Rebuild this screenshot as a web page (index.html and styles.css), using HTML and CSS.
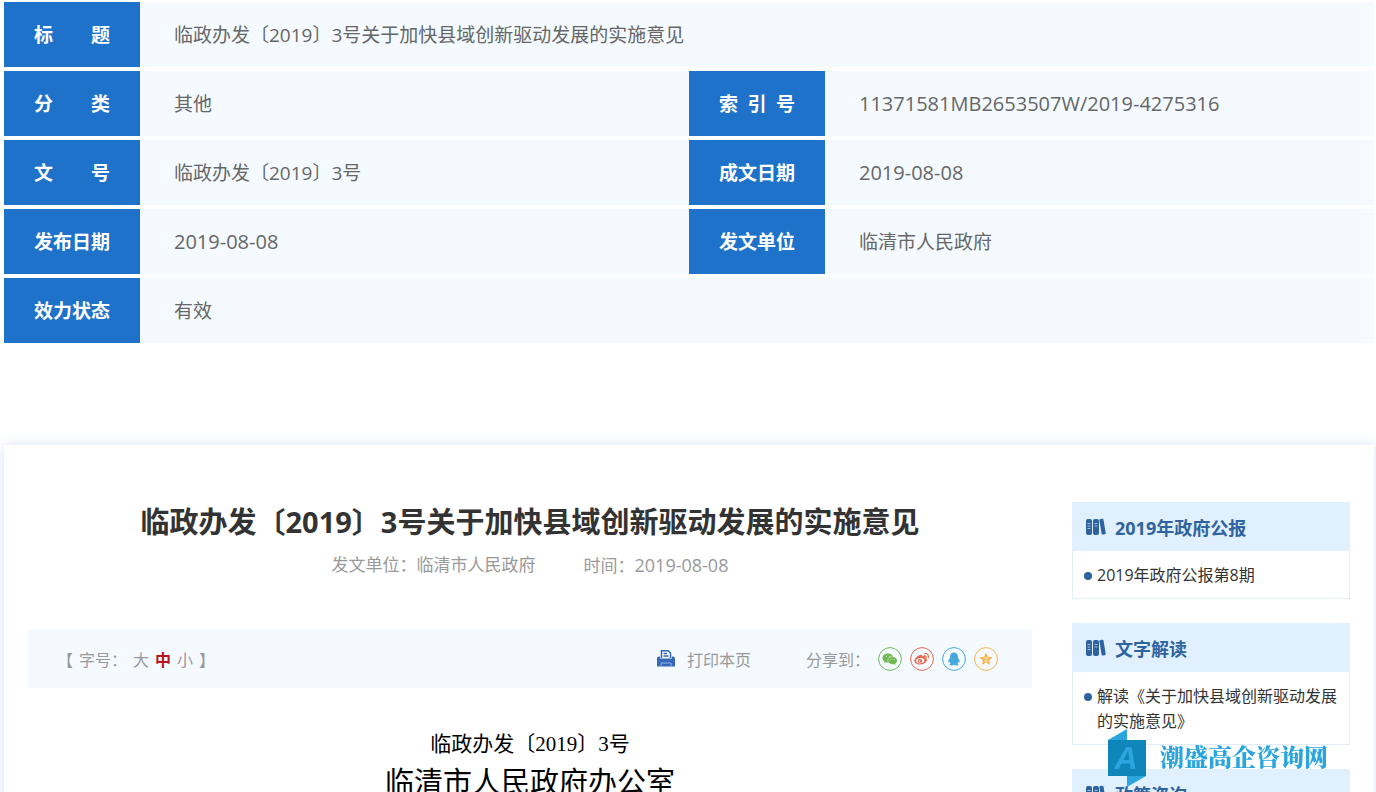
FILE: index.html
```html
<!DOCTYPE html>
<html lang="zh-CN">
<head>
<meta charset="utf-8">
<title>临政办发〔2019〕3号关于加快县域创新驱动发展的实施意见</title>
<link rel="stylesheet" href="styles.css">
</head>
<body>
<svg class="symbols" aria-hidden="true">
  <symbol id="books" viewBox="0 0 20 18">
    <rect x="0" y="1" width="6" height="16" rx="2"/>
    <rect x="7" y="1" width="6" height="16" rx="2"/>
    <path d="M13.400 2.200q-.1-1 .9-1.200l2-.2q1-.1 1.200.9l2.200 13.300q.1 1-.9 1.200l-2 .4q-1 .1-1.200-.9z"/>
    <path d="M1.500 5.500h3M1.500 8h3M1.500 10.500h3M8.500 5.500h3M8.500 8h3" stroke="#9dbde0" stroke-width="1"/>
  </symbol>
</svg>

<table class="info">
  <colgroup><col class="label-col"><col><col class="label-col"><col></colgroup>
  <tr><th scope="row"><span class="label">标题</span></th><td colspan="3">临政办发〔2019〕3号关于加快县域创新驱动发展的实施意见</td></tr>
  <tr><th scope="row"><span class="label">分类</span></th><td>其他</td><th scope="row"><span class="label">索引号</span></th><td class="num">11371581MB2653507W/2019-4275316</td></tr>
  <tr><th scope="row"><span class="label">文号</span></th><td>临政办发〔2019〕3号</td><th scope="row"><span class="label">成文日期</span></th><td class="num">2019-08-08</td></tr>
  <tr><th scope="row"><span class="label">发布日期</span></th><td class="num">2019-08-08</td><th scope="row"><span class="label">发文单位</span></th><td>临清市人民政府</td></tr>
  <tr><th scope="row"><span class="label">效力状态</span></th><td colspan="3">有效</td></tr>
</table>

<div class="card">
  <main class="article">
    <h1>临政办发〔2019〕3号关于加快县域创新驱动发展的实施意见</h1>
    <div class="meta">
      <span>发文单位：临清市人民政府</span>
      <span>时间：<time class="date">2019-08-08</time></span>
    </div>
    <div class="toolbar">
      <div class="sizes">
        <span>【</span><span>字号：</span>
        <button type="button">大</button>
        <button type="button" class="active">中</button>
        <button type="button">小</button>
        <span>】</span>
      </div>
      <button type="button" class="print">
        <svg width="18" height="17" viewBox="0 0 18 17" aria-hidden="true">
          <path d="M4.500 8V.8h6.500L13.500 3v5" fill="#fff" stroke="#2f66b5" stroke-width="1.500"/>
          <path d="M6.500 3.500h3.500M6.500 6h5" stroke="#2f66b5" stroke-width="1.400"/>
          <path d="M0 8.500q0-2 2-2h1v2h12v-2h1q2 0 2 2v8H0z" fill="#3569b8"/>
          <path d="M4 16.500v-3.500h10v3.500" fill="none" stroke="#8fb4e4" stroke-width="1"/>
        </svg>
        <span>打印本页</span>
      </button>
      <div class="share">
        <span>分享到：</span>
        <a href="#" class="wechat" aria-label="微信">
          <svg viewBox="0 0 24 24"><circle class="ring" cx="12" cy="12" r="11.400"/>
            <path d="M9.900 6.500c-3 0-5.400 2-5.400 4.500 0 1.400.8 2.600 2 3.500l-.5 1.700 2-1q1 .3 2 .3c3 0 5.300-2 5.300-4.500s-2.400-4.500-5.400-4.500z"/>
            <path d="M14.500 9.700c-2.700 0-4.700 1.700-4.700 3.900s2 3.900 4.700 3.900q.9 0 1.700-.2l1.700.9-.4-1.500c1-.7 1.800-1.800 1.800-3.100 0-2.200-2.100-3.900-4.800-3.900z" stroke="#f4faff" stroke-width=".5"/>
            <path d="M8 9.400h.9M11.300 9.400h.9M12.600 12.500h.8M15.700 12.500h.8" stroke="#f4faff" stroke-width="1"/></svg>
        </a>
        <a href="#" class="weibo" aria-label="微博">
          <svg viewBox="0 0 24 24"><circle class="ring" cx="12" cy="12" r="11.400"/>
            <path d="M10.200 8c1.500-.6 2.300 0 1.900 1.500 2-.8 3.800-.5 3.200 1.400 1.500.4 2 1.300 1.600 2.600-.7 2.400-3.900 4-7 4-3.200 0-5.500-1.500-5.500-3.700C4.400 11.400 7.700 8.700 10.200 8z"/>
            <ellipse cx="10.300" cy="13.700" rx="4.200" ry="2.700" fill="#f4faff" transform="rotate(-8 10.300 13.700)"/>
            <ellipse cx="10" cy="13.900" rx="2.300" ry="1.900"/>
            <circle cx="9.600" cy="14.100" r=".8" fill="#f4faff"/>
            <path d="M14.200 6.700c2.800-.8 5 1.400 4.100 4.200M14.300 8.900c1.300-.4 2.200.5 1.900 1.700" fill="none" stroke="#e6684a" stroke-width="1.100" stroke-linecap="round"/></svg>
        </a>
        <a href="#" class="qq" aria-label="QQ">
          <svg viewBox="0 0 24 24"><circle class="ring" cx="12" cy="12" r="11.400"/>
            <path d="M12 5.500c-2.500 0-3.900 1.800-3.900 4.100v1.200c-1 1.400-1.800 2.700-1.800 4 0 .9.500.9 1.300-.1q.3 1.200 1.100 2c-.8.4-1.200.8-1 1.200.3.700 3 .7 4.300-.1 1.300.8 4 .8 4.300.1.200-.4-.2-.8-1-1.200q.8-.8 1.100-2c.8 1 1.300 1 1.300.1 0-1.300-.8-2.600-1.800-4V9.600c0-2.300-1.400-4.100-3.900-4.100z"/></svg>
        </a>
        <a href="#" class="qzone" aria-label="QQ空间">
          <svg viewBox="0 0 24 24"><circle class="ring" cx="12" cy="12" r="11.400"/>
            <path d="m12 5.500 1.900 4.300 4.700.5-3.500 3.100 1 4.600-4.100-2.400L7.900 18l1-4.600-3.500-3.100 4.700-.5z"/>
            <path d="M9.400 11.200q2.600-.6 5 0l-3.900 2.900q2 .4 3.900 0" fill="none" stroke="#fdf1db" stroke-width=".8"/></svg>
        </a>
      </div>
    </div>
    <p class="doc-no">临政办发〔2019〕3号</p>
    <p class="doc-org">临清市人民政府办公室</p>
  </main>

  <aside class="side">
    <section>
      <h2><svg class="books" aria-hidden="true"><use href="#books"/></svg>2019年政府公报</h2>
      <ul><li><a href="#">2019年政府公报第8期</a></li></ul>
    </section>
    <section>
      <h2><svg class="books" aria-hidden="true"><use href="#books"/></svg>文字解读</h2>
      <ul><li><a href="#">解读《关于加快县域创新驱动发展的实施意见》</a></li></ul>
    </section>
    <section>
      <h2><svg class="books" aria-hidden="true"><use href="#books"/></svg>政策咨询</h2>
    </section>
  </aside>
</div>

<div class="watermark">
  <svg width="38" height="58" viewBox="0 0 38 58" aria-hidden="true">
    <path d="M0 11 19 0v11zM19 47h19L19 58z" fill="#2aa5de"/>
    <path d="M0 11h38v36H0z" fill="#0f86ba"/>
    <text x="18" y="40" text-anchor="middle" class="mark">A</text>
  </svg>
  <span class="mark-name">潮盛高企咨询网</span>
</div>
</body>
</html>
```
FILE: styles.css
```css
* {
  box-sizing: border-box;
}

html {
  scrollbar-width: none;
}

body {
  margin: 0;
  padding: 2px 2px 0 4px;
  background: #fff;
  color: #333;
  font-family: "Open Sans", "Noto Sans CJK SC", sans-serif;
  font-size: 16px;
}

button {
  padding: 0;
  border: 0;
  background: none;
  color: inherit;
  font: inherit;
  cursor: pointer;
}

a {
  color: inherit;
  text-decoration: none;
}

.symbols {
  position: absolute;
  width: 0;
  height: 0;
}

.info {
  width: 100%;
  table-layout: fixed;
  border-spacing: 0;
  font-size: 19px;
  line-height: 28px;
}

.label-col {
  width: 136px;
}

.info th,
.info td {
  height: 69px;
  padding: 0;
  border-bottom: 4px solid #fff;
  background-clip: padding-box;
}

.info th {
  background-color: #1f72c9;
  color: #fff;
}

.info td {
  padding-left: 34px;
  background-color: #f4faff;
  color: #666;
}

.info .num {
  font-size: 20px;
}

.label {
  display: block;
  width: 76px;
  margin: 0 auto;
  text-align: justify;
  text-align-last: justify;
}

.card {
  display: flex;
  gap: 40px;
  margin-top: 98px;
  padding: 57px 24px;
  background: #fff;
  box-shadow: 0 0 12px #d5e3f6;
}

.article {
  flex: 1;
  text-align: center;
}

h1 {
  margin: 0;
  font-size: 29px;
  line-height: 40px;
}

.meta {
  display: flex;
  justify-content: center;
  gap: 48px;
  margin: 8px 0 48px;
  color: #999;
  font-size: 17px;
  line-height: 30px;
}

.date {
  font-size: 18px;
}

.toolbar {
  display: flex;
  align-items: center;
  height: 59px;
  padding: 0 34px 0 29px;
  background: #f4faff;
  color: #999;
}

.sizes {
  display: flex;
  gap: 6px;
  margin-right: auto;
}

.sizes .active {
  color: #b8141b;
  font-weight: bold;
}

.print {
  display: flex;
  align-items: center;
  gap: 12px;
  margin-right: 55px;
}

.share {
  display: flex;
  align-items: center;
  gap: 8px;
}

.share a,
.share a svg {
  display: block;
  width: 24px;
  height: 24px;
}

.ring {
  fill: none;
  stroke: currentColor;
}

.share path,
.share ellipse {
  fill: currentColor;
}

.share path[fill="none"] {
  fill: none;
}

.share ellipse[fill] {
  fill: #f4faff;
}

.wechat {
  color: #6fb950;
}

.weibo {
  color: #e6684a;
}

.qq {
  color: #45a9dc;
}

.qzone {
  color: #f5b448;
}

.doc-no,
.doc-org {
  margin: 0;
  color: #000;
  font-family: "Liberation Serif", "Noto Sans CJK SC", serif;
}

.doc-no {
  margin-top: 40px;
  font-size: 21px;
  line-height: 32px;
}

.doc-org {
  margin-top: 2px;
  font-size: 29px;
  line-height: 42px;
}

.side {
  width: 278px;
}

.side section {
  margin-bottom: 24px;
}

.side h2 {
  display: flex;
  align-items: center;
  gap: 9px;
  height: 49px;
  margin: 0;
  padding-left: 14px;
  background: #e1f0fe;
  color: #2f639f;
  font-size: 18px;
}

.books {
  width: 20px;
  height: 18px;
  fill: #2f639f;
}

.side ul {
  margin: 0;
  padding: 12px 10px 10px 11px;
  border: 1px solid #e1eef9;
  border-top: 0;
  list-style: none;
  line-height: 25px;
}

.side li {
  display: flex;
  gap: 5px;
}

.side li::before {
  content: "";
  flex: none;
  width: 8px;
  height: 8px;
  margin-top: 9px;
  border-radius: 50%;
  background: #2f639f;
}

.watermark {
  position: fixed;
  right: 48px;
  bottom: 5px;
  display: flex;
  align-items: center;
  gap: 14px;
  color: #2aa5de;
  font-family: "Noto Serif CJK SC", "Noto Sans CJK SC", serif;
  font-size: 24px;
  font-weight: 900;
}

.mark {
  fill: #2aa5de;
  font: italic bold 32px "Liberation Sans", sans-serif;
}

.mark-name {
  padding-bottom: 6px;
}
```
